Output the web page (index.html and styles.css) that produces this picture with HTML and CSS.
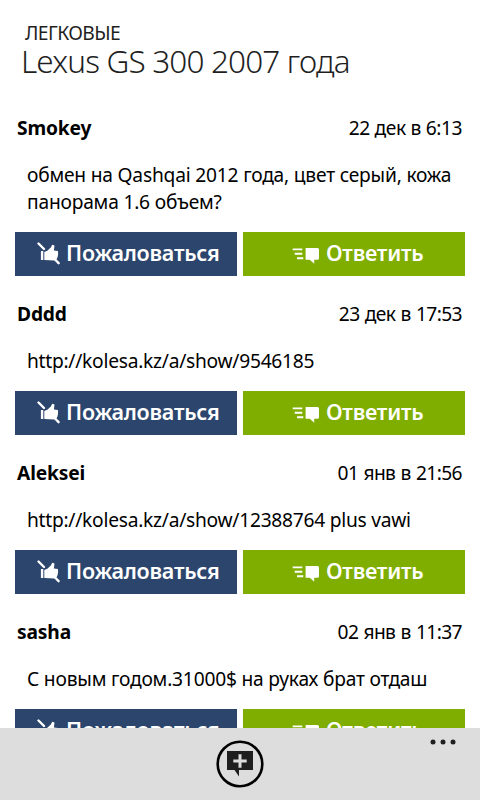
FILE: index.html
```html
<!DOCTYPE html>
<html lang="ru">
<head><meta charset="utf-8"><title>Lexus GS 300 2007 года</title><link rel="stylesheet" href="styles.css"></head>
<body>
<svg class="defs"><defs>
<symbol id="complain" viewBox="0 0 26 26"><path d="M2.500 2.500L8 8M19 18.500l3.600 3.700" stroke="#fff" stroke-width="2.400" stroke-linecap="round"/><path d="M4.900 10h2.400v9H4.900zM8.300 11l3-1.200 3.500-3.300 1.400-2.800 2.300.8-.6 5 4 .5c.5 3.100.1 6.300-1.500 8.600l-2.300 1-9.800-.6z" fill="#fff"/></symbol>
<symbol id="reply" viewBox="0 0 28 18"><path d="M.7 2.400h9.600M2.700 6.800h7.600M5 11.200h6.300" stroke="#fff" stroke-width="1.900"/><path d="M13.600 1h11.900q1.500 0 1.500 1.500v8.700q0 1.500-1.500 1.500h-3.300v4l-4.400-4h-4.200z" fill="#fff"/></symbol>
</defs></svg>
<div class="screen">
<header class="header"><div class="category">ЛЕГКОВЫЕ</div><h1 class="title">Lexus GS 300 2007 года</h1></header>
<main class="comments">
<article class="comment"><div class="meta"><b class="name">Smokey</b><time class="date">22 дек в 6:13</time></div><p class="text">обмен на Qashqai 2012 года, цвет серый, кожа<br>панорама 1.6 объем?</p><div class="actions"><button class="btn btn-complain"><svg class="icon-complain"><use href="#complain"/></svg>Пожаловаться</button><button class="btn btn-reply"><svg class="icon-reply"><use href="#reply"/></svg>Ответить</button></div></article>
<article class="comment"><div class="meta"><b class="name">Dddd</b><time class="date long">23 дек в 17:53</time></div><p class="text url">http://kolesa.kz/a/show/9546185</p><div class="actions"><button class="btn btn-complain"><svg class="icon-complain"><use href="#complain"/></svg>Пожаловаться</button><button class="btn btn-reply"><svg class="icon-reply"><use href="#reply"/></svg>Ответить</button></div></article>
<article class="comment"><div class="meta"><b class="name">Aleksei</b><time class="date long">01 янв в 21:56</time></div><p class="text url">http://kolesa.kz/a/show/12388764 plus vawi</p><div class="actions"><button class="btn btn-complain"><svg class="icon-complain"><use href="#complain"/></svg>Пожаловаться</button><button class="btn btn-reply"><svg class="icon-reply"><use href="#reply"/></svg>Ответить</button></div></article>
<article class="comment"><div class="meta"><b class="name">sasha</b><time class="date long">02 янв в 11:37</time></div><p class="text">С новым годом.31000$ на руках брат отдаш</p><div class="actions"><button class="btn btn-complain"><svg class="icon-complain"><use href="#complain"/></svg>Пожаловаться</button><button class="btn btn-reply"><svg class="icon-reply"><use href="#reply"/></svg>Ответить</button></div></article>
</main>
<footer class="appbar">
<svg class="add" viewBox="0 0 48 48"><circle cx="24" cy="24" r="22.300" fill="none" stroke="#000" stroke-width="2.600"/><path d="M11 11h26v19H23v6.500L18.500 30H11z" fill="#1f1f1f"/><path d="M24 14.300v13.400M17.300 21h13.400" stroke="#ddd" stroke-width="3"/></svg>
<svg class="more" viewBox="0 0 26 6"><g fill="#1f1f1f"><circle cx="3" cy="3" r="2.500"/><circle cx="13" cy="3" r="2.500"/><circle cx="23" cy="3" r="2.500"/></g></svg>
</footer>
</div>
</body></html>
```
FILE: styles.css
```css
*{box-sizing:border-box}
body{margin:0;background:#fff;color:#000;font-family:"Noto Sans",sans-serif}
.defs{display:none}
.screen{height:800px;display:flex;flex-direction:column;overflow:hidden}
.header{flex:none;height:114px;padding:22px 21px 0;color:#1f1f1f}
.category{padding-left:4px;font-size:19.3px;line-height:21px;letter-spacing:-.6px;font-weight:400}
.title{margin:0;font-size:31.5px;line-height:36px;font-weight:300;letter-spacing:-.85px}
.comments{flex:1;min-height:0;overflow:hidden;padding:0 15px}
.comment{margin-bottom:24px}
.meta{display:flex;justify-content:space-between;padding:0 3px 0 2px;font-size:19.2px;line-height:27px}
.name{letter-spacing:-.15px}
.date{letter-spacing:-.45px;word-spacing:.3px}
.long{letter-spacing:-.6px;word-spacing:.8px}
.text{margin:20px 0 17px;padding-left:12px;font-size:19.2px;line-height:27px;letter-spacing:-.2px;white-space:nowrap}
.url{letter-spacing:-.26px}
.actions{display:grid;grid-template-columns:1fr 1fr;gap:6px}
.btn{display:flex;align-items:center;height:44px;border:0;padding:0 0 2px;color:#fff;font:600 21.5px/30px "Noto Sans",sans-serif;letter-spacing:-.23px;white-space:nowrap}
.btn-complain{background:#2c456d;padding-left:21px}
.btn-reply{background:#7fae00;padding-left:49px}
.icon-complain{flex:none;width:26px;height:26px;margin:2px 4px 0 0}
.icon-reply{flex:none;width:28px;height:18px;margin:5px 6px 0 0}
.appbar{position:relative;flex:none;height:72px;background:#ddd;display:flex;justify-content:center;align-items:center}
.add{width:48px;height:48px}
.more{position:absolute;left:430px;top:11px;width:26px;height:6px}
```
